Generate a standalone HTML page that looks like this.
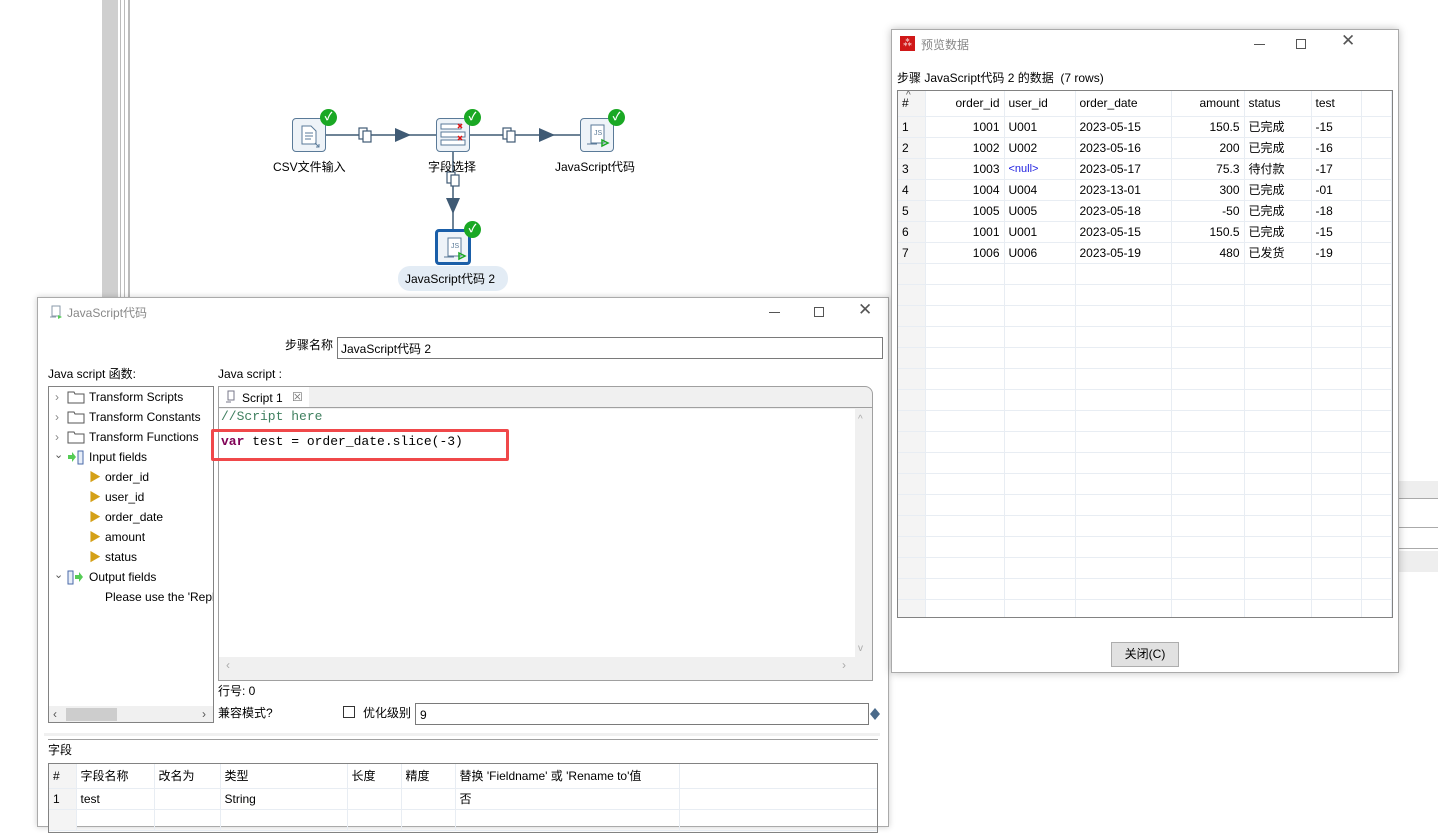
<!DOCTYPE html>
<html><head><meta charset="utf-8">
<style>
*{box-sizing:border-box;margin:0;padding:0}
body{width:1438px;height:822px;overflow:hidden;background:#fff;position:relative;font-family:"Liberation Sans","Noto Sans CJK SC",sans-serif;font-size:12px;color:#000}
.a{position:absolute}
.t{position:absolute;white-space:nowrap;line-height:14px}
.mono{font-family:"Liberation Mono","Noto Sans CJK SC",monospace}
.node{position:absolute;width:34px;height:34px;border:1px solid #5a7a98;border-radius:4px;background:#eef3f8}
.chk{position:absolute;width:17px;height:17px;border-radius:50%;background:#1aa824;color:#fff;font-size:11px;line-height:17px;text-align:center;font-weight:bold}
.grid td{border-right:1px solid #e8edf3;border-bottom:1px solid #e8edf3;height:21px;padding:0 4px;white-space:nowrap}
.grid{border-collapse:collapse;table-layout:fixed;font-size:12px}
.grid td.n{background:#f4f4f4}
.r{text-align:right}
</style></head><body>
<!-- background app -->
<div class="a" style="left:102px;top:0;width:16px;height:300px;background:#cfcfcf"></div>
<div class="a" style="left:120px;top:0;width:1px;height:300px;background:#bbb"></div>
<div class="a" style="left:124px;top:0;width:1px;height:300px;background:#bbb"></div>
<div class="a" style="left:128px;top:0;width:2px;height:300px;background:#bbb"></div>
<div class="a" style="left:1398px;top:481px;width:40px;height:17px;background:#eee"></div>
<div class="a" style="left:1398px;top:498px;width:40px;height:1px;background:#aaa"></div>
<div class="a" style="left:1398px;top:527px;width:40px;height:1px;background:#aaa"></div>
<div class="a" style="left:1398px;top:548px;width:40px;height:1px;background:#aaa"></div>
<div class="a" style="left:1398px;top:551px;width:40px;height:21px;background:#eee"></div>

<!-- canvas -->
<svg class="a" style="left:0;top:0" width="890" height="300">
<g stroke="#3f5a74" stroke-width="1.5" fill="none">
<line x1="326" y1="135" x2="436" y2="135"/><line x1="470" y1="135" x2="580" y2="135"/><line x1="453" y1="152" x2="453" y2="230"/>
</g>
<g fill="#3f5a74"><path d="M395 128 L411 135 L395 142 Z"/><path d="M539 128 L555 135 L539 142 Z"/><path d="M446 198 L453 214 L460 198 Z"/></g>
<g fill="#fff" stroke="#3f5a74" stroke-width="1.2"><rect x="359" y="128" width="8" height="11"/><rect x="363" y="131" width="8" height="11"/><rect x="503" y="128" width="8" height="11"/><rect x="507" y="131" width="8" height="11"/><rect x="447" y="172" width="8" height="11"/><rect x="451" y="175" width="8" height="11"/></g>
</svg>
<div class="node" style="left:292px;top:118px"><svg width="32" height="32"><path d="M9 7h9l5 5v13H9z" fill="#fff" stroke="#5a7a98"/><path d="M12 14h8M12 17h8M12 20h6" stroke="#5a7a98"/><path d="M22 24l4 4M26 25v3h-3" stroke="#5a7a98" fill="none"/></svg></div>
<div class="chk" style="left:320px;top:109px">✓</div>
<div class="t" style="left:273px;top:160px">CSV文件输入</div>
<div class="node" style="left:436px;top:118px"><svg width="32" height="32"><rect x="4" y="5" width="20" height="5" fill="#fff" stroke="#5a7a98"/><rect x="4" y="13" width="24" height="5" fill="#fff" stroke="#5a7a98"/><rect x="4" y="21" width="24" height="5" fill="#fff" stroke="#5a7a98"/><path d="M21 5l4 4M25 5l-4 4M21 17l4 4M25 17l-4 4" stroke="#e01010" stroke-width="1.5"/></svg></div>
<div class="chk" style="left:464px;top:109px">✓</div>
<div class="t" style="left:428px;top:160px">字段选择</div>
<div class="node" style="left:580px;top:118px"><svg width="32" height="32"><path d="M10 6h13v18H10z" fill="#fff" stroke="#5a7a98"/><path d="M6 25h10" stroke="#5a7a98"/><text x="13" y="16" font-size="7" fill="#5a7a98" font-family="Liberation Sans">JS</text><path d="M21 21l6 3-6 3z" fill="none" stroke="#1aa824" stroke-width="1.5"/></svg></div>
<div class="chk" style="left:608px;top:109px">✓</div>
<div class="t" style="left:555px;top:160px">JavaScript代码</div>
<div class="node" style="left:435px;top:229px;width:36px;height:36px;border:3px solid #1a5ea8"><svg width="32" height="32"><path d="M10 6h13v18H10z" fill="#fff" stroke="#5a7a98"/><path d="M6 25h10" stroke="#5a7a98"/><text x="13" y="16" font-size="7" fill="#5a7a98" font-family="Liberation Sans">JS</text><path d="M21 21l6 3-6 3z" fill="none" stroke="#1aa824" stroke-width="1.5"/></svg></div>
<div class="chk" style="left:464px;top:221px">✓</div>
<div class="a" style="left:398px;top:266px;width:110px;height:25px;border-radius:12px;background:#e3ecf5"></div>
<div class="t" style="left:405px;top:272px">JavaScript代码 2</div>

<!-- JS dialog -->
<div class="a" style="left:37px;top:297px;width:852px;height:530px;background:#fff;border:1px solid #aaa;box-shadow:0 0 6px rgba(0,0,0,.2)"></div>
<svg class="a" style="left:48px;top:304px" width="16" height="16"><path d="M4 2h8v10H4z" fill="#fff" stroke="#8a9aaa"/><path d="M2 13h6" stroke="#8a9aaa"/><path d="M10 11l4 2-4 2z" fill="#5c5"/></svg>
<div class="t" style="left:67px;top:306px;color:#888">JavaScript代码</div>
<div class="a" style="left:769px;top:312px;width:11px;height:1px;background:#555"></div>
<div class="a" style="left:814px;top:307px;width:10px;height:10px;border:1px solid #555"></div>
<div class="t" style="left:858px;top:303px;font-size:17px;color:#555">✕</div>
<div class="t" style="left:285px;top:338px">步骤名称</div>
<div class="a" style="left:337px;top:337px;width:546px;height:22px;border:1px solid #7a7a7a"></div>
<div class="t" style="left:341px;top:342px">JavaScript代码 2</div>
<div class="t" style="left:48px;top:367px">Java script 函数:</div>
<div class="t" style="left:218px;top:367px">Java script :</div>
<!-- tree -->
<div class="a" style="left:48px;top:386px;width:166px;height:337px;border:1px solid #828282;overflow:hidden">
<div class="a" style="left:0;top:319px;width:164px;height:17px;background:#f0f0f0"></div>
<div class="a" style="left:17px;top:321px;width:51px;height:13px;background:#cdcdcd"></div>
<div class="t" style="left:4px;top:320px;color:#555">‹</div><div class="t" style="left:153px;top:320px;color:#555">›</div>
</div>
<div class="a" style="left:49px;top:387px">
<div class="t" style="left:6px;top:3px;color:#888">›</div><svg class="a" style="left:18px;top:3px" width="18" height="14"><path d="M1 2h6l1 2h9v9H1z" fill="#fff" stroke="#555"/></svg><div class="t" style="left:40px;top:3px">Transform Scripts</div>
<div class="t" style="left:6px;top:23px;color:#888">›</div><svg class="a" style="left:18px;top:23px" width="18" height="14"><path d="M1 2h6l1 2h9v9H1z" fill="#fff" stroke="#555"/></svg><div class="t" style="left:40px;top:23px">Transform Constants</div>
<div class="t" style="left:6px;top:43px;color:#888">›</div><svg class="a" style="left:18px;top:43px" width="18" height="14"><path d="M1 2h6l1 2h9v9H1z" fill="#fff" stroke="#555"/></svg><div class="t" style="left:40px;top:43px">Transform Functions</div>
<div class="t" style="left:5px;top:61px;color:#555;font-size:11px">⌄</div><svg class="a" style="left:18px;top:63px" width="18" height="15"><path d="M1 5h4V2l4 5-4 5V9H1z" fill="#5c5"/><rect x="11" y="1" width="5" height="13" fill="#e8eef8" stroke="#4a6aa8"/></svg><div class="t" style="left:40px;top:63px">Input fields</div>
<div class="t" style="left:40px;top:83px;color:#d4a017">▶</div><div class="t" style="left:56px;top:83px">order_id</div>
<div class="t" style="left:40px;top:103px;color:#d4a017">▶</div><div class="t" style="left:56px;top:103px">user_id</div>
<div class="t" style="left:40px;top:123px;color:#d4a017">▶</div><div class="t" style="left:56px;top:123px">order_date</div>
<div class="t" style="left:40px;top:143px;color:#d4a017">▶</div><div class="t" style="left:56px;top:143px">amount</div>
<div class="t" style="left:40px;top:163px;color:#d4a017">▶</div><div class="t" style="left:56px;top:163px">status</div>
<div class="t" style="left:5px;top:181px;color:#555;font-size:11px">⌄</div><svg class="a" style="left:18px;top:183px" width="18" height="15"><rect x="1" y="1" width="5" height="13" fill="#e8eef8" stroke="#4a6aa8"/><path d="M8 5h4V2l4 5-4 5V9H8z" fill="#5c5"/></svg><div class="t" style="left:40px;top:183px">Output fields</div>
<div class="a" style="left:56px;top:203px;width:108px;overflow:hidden;height:16px"><div class="t" style="left:0;top:0">Please use the 'Replace'</div></div>
</div>
<!-- editor -->
<div class="a" style="left:218px;top:386px;width:655px;height:295px;border:1px solid #a0a0a0;border-radius:0 8px 0 0;background:#f0f0f0"></div>
<div class="a" style="left:219px;top:387px;width:90px;height:20px;background:#fff"></div>
<svg class="a" style="left:224px;top:390px" width="14" height="14"><path d="M4 1h6v9H4z" fill="#fff" stroke="#778"/><path d="M2 12h5" stroke="#778"/></svg>
<div class="t" style="left:242px;top:391px">Script 1</div>
<div class="t" style="left:292px;top:390px;color:#777">☒</div>
<div class="a" style="left:219px;top:407px;width:653px;height:1px;background:#a0a0a0"></div>
<div class="a" style="left:219px;top:409px;width:636px;height:248px;background:#fff"></div>
<div class="t" style="left:858px;top:413px;color:#aaa;font-size:10px">^</div>
<div class="t" style="left:858px;top:642px;color:#aaa;font-size:10px">v</div>
<div class="t" style="left:226px;top:658px;color:#aaa">‹</div>
<div class="t" style="left:842px;top:658px;color:#aaa">›</div>
<div class="t mono" style="left:221px;top:410px;color:#3f7f5f;font-size:13px">//Script here</div>
<div class="t mono" style="left:221px;top:435px;font-size:13px"><b style="color:#7f0055">var</b> test = order_date.slice(-3)</div>
<div class="a" style="left:211px;top:429px;width:298px;height:32px;border:3px solid #f0484a;border-radius:2px"></div>
<div class="t" style="left:218px;top:684px">行号: 0</div>
<div class="t" style="left:218px;top:706px">兼容模式?</div>
<div class="a" style="left:343px;top:706px;width:12px;height:12px;border:1px solid #333"></div>
<div class="t" style="left:363px;top:706px">优化级别</div>
<div class="a" style="left:415px;top:703px;width:454px;height:22px;border:1px solid #7a7a7a"></div>
<div class="t" style="left:420px;top:708px">9</div>
<svg class="a" style="left:869px;top:707px" width="12" height="14"><path d="M6 1l5 6-5 6-5-6z" fill="#4a6a8a"/></svg>
<div class="a" style="left:44px;top:733px;width:836px;height:3px;background:#f0f0f0"></div>
<div class="a" style="left:48px;top:739px;width:830px;height:1px;background:#a0a0a0"></div>
<div class="t" style="left:48px;top:743px">字段</div>
<div class="a" style="left:48px;top:763px;width:830px;height:70px;border:1px solid #828282;overflow:hidden">
<table class="grid" style="width:830px"><colgroup><col style="width:27px"><col style="width:78px"><col style="width:66px"><col style="width:127px"><col style="width:54px"><col style="width:54px"><col style="width:224px"><col></colgroup>
<tr style="height:24px"><td class="n">#</td><td>字段名称</td><td>改名为</td><td>类型</td><td>长度</td><td>精度</td><td>替换 'Fieldname' 或 'Rename to'值</td><td></td></tr>
<tr><td class="n">1</td><td>test</td><td></td><td>String</td><td></td><td></td><td>否</td><td></td></tr>
<tr><td class="n"></td><td></td><td></td><td></td><td></td><td></td><td></td><td></td></tr></table></div>

<!-- Preview dialog -->
<div class="a" style="left:891px;top:29px;width:508px;height:644px;background:#fff;border:1px solid #aaa;box-shadow:0 0 8px rgba(0,0,0,.25)"></div>
<div class="a" style="left:900px;top:36px;width:15px;height:15px;background:#d01818;color:#fff;font-size:10px;line-height:15px;text-align:center">⁂</div>
<div class="t" style="left:921px;top:38px;color:#888">预览数据</div>
<div class="a" style="left:1254px;top:44px;width:11px;height:1px;background:#555"></div>
<div class="a" style="left:1296px;top:39px;width:10px;height:10px;border:1px solid #555"></div>
<div class="t" style="left:1341px;top:34px;font-size:17px;color:#555">✕</div>
<div class="t" style="left:897px;top:71px">步骤 JavaScript代码 2 的数据&nbsp; (7 rows)</div>
<div class="a" style="left:897px;top:90px;width:496px;height:528px;border:1px solid #828282;overflow:hidden">
<div class="t" style="left:8px;top:-2px;font-size:10px;color:#555">^</div>
<table class="grid" style="width:494px"><colgroup><col style="width:27px"><col style="width:79px"><col style="width:71px"><col style="width:96px"><col style="width:73px"><col style="width:67px"><col style="width:50px"><col></colgroup>
<tr style="height:25px"><td class="n">#</td><td class="r">order_id</td><td>user_id</td><td>order_date</td><td class="r">amount</td><td>status</td><td>test</td><td></td></tr>
<tr><td class="n">1</td><td class="r">1001</td><td>U001</td><td>2023-05-15</td><td class="r">150.5</td><td>已完成</td><td>-15</td><td></td></tr>
<tr><td class="n">2</td><td class="r">1002</td><td>U002</td><td>2023-05-16</td><td class="r">200</td><td>已完成</td><td>-16</td><td></td></tr>
<tr><td class="n">3</td><td class="r">1003</td><td style="color:#2020e0;font-size:11px">&lt;null&gt;</td><td>2023-05-17</td><td class="r">75.3</td><td>待付款</td><td>-17</td><td></td></tr>
<tr><td class="n">4</td><td class="r">1004</td><td>U004</td><td>2023-13-01</td><td class="r">300</td><td>已完成</td><td>-01</td><td></td></tr>
<tr><td class="n">5</td><td class="r">1005</td><td>U005</td><td>2023-05-18</td><td class="r">-50</td><td>已完成</td><td>-18</td><td></td></tr>
<tr><td class="n">6</td><td class="r">1001</td><td>U001</td><td>2023-05-15</td><td class="r">150.5</td><td>已完成</td><td>-15</td><td></td></tr>
<tr><td class="n">7</td><td class="r">1006</td><td>U006</td><td>2023-05-19</td><td class="r">480</td><td>已发货</td><td>-19</td><td></td></tr>
<tr><td class="n"></td><td></td><td></td><td></td><td></td><td></td><td></td><td></td></tr>
<tr><td class="n"></td><td></td><td></td><td></td><td></td><td></td><td></td><td></td></tr>
<tr><td class="n"></td><td></td><td></td><td></td><td></td><td></td><td></td><td></td></tr>
<tr><td class="n"></td><td></td><td></td><td></td><td></td><td></td><td></td><td></td></tr>
<tr><td class="n"></td><td></td><td></td><td></td><td></td><td></td><td></td><td></td></tr>
<tr><td class="n"></td><td></td><td></td><td></td><td></td><td></td><td></td><td></td></tr>
<tr><td class="n"></td><td></td><td></td><td></td><td></td><td></td><td></td><td></td></tr>
<tr><td class="n"></td><td></td><td></td><td></td><td></td><td></td><td></td><td></td></tr>
<tr><td class="n"></td><td></td><td></td><td></td><td></td><td></td><td></td><td></td></tr>
<tr><td class="n"></td><td></td><td></td><td></td><td></td><td></td><td></td><td></td></tr>
<tr><td class="n"></td><td></td><td></td><td></td><td></td><td></td><td></td><td></td></tr>
<tr><td class="n"></td><td></td><td></td><td></td><td></td><td></td><td></td><td></td></tr>
<tr><td class="n"></td><td></td><td></td><td></td><td></td><td></td><td></td><td></td></tr>
<tr><td class="n"></td><td></td><td></td><td></td><td></td><td></td><td></td><td></td></tr>
<tr><td class="n"></td><td></td><td></td><td></td><td></td><td></td><td></td><td></td></tr>
<tr><td class="n"></td><td></td><td></td><td></td><td></td><td></td><td></td><td></td></tr>
<tr><td class="n"></td><td></td><td></td><td></td><td></td><td></td><td></td><td></td></tr>
<tr><td class="n"></td><td></td><td></td><td></td><td></td><td></td><td></td><td></td></tr>
</table></div>
<div class="a" style="left:1111px;top:642px;width:68px;height:25px;background:#e1e1e1;border:1px solid #adadad;text-align:center;line-height:23px">关闭(C)</div>
</body></html>
